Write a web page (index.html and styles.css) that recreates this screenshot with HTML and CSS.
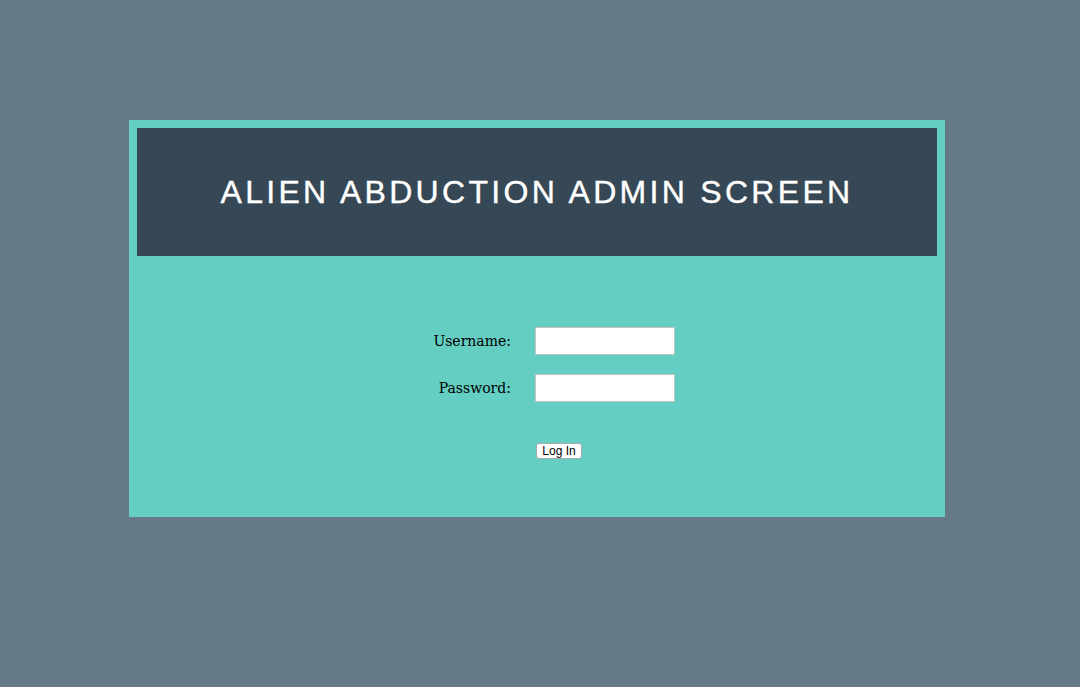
FILE: index.html
```html
<!DOCTYPE html>
<html>
<head>
<meta charset="utf-8">
<title>Alien Abduction Admin Screen</title>
<link rel="stylesheet" href="styles.css">
</head>
<body>
<div class="page">
  <div class="panel">
    <header class="banner">
      <h1 class="title">ALIEN ABDUCTION ADMIN SCREEN</h1>
    </header>
    <form class="login">
      <label class="label" for="user">Username:</label>
      <input class="field" id="user" type="text">
      <label class="label" for="pass">Password:</label>
      <input class="field" id="pass" type="password">
      <span class="spacer"></span>
      <button class="btn" type="button">Log In</button>
    </form>
  </div>
</div>
</body>
</html>
```
FILE: styles.css
```css
html, body {
  margin: 0;
  padding: 0;
  background: #667987;
  height: 100%;
}
.page {
  padding: 120px 0 0 129px;
}
.panel {
  width: 800px;
  padding: 8px;
  background: #63cec1;
}
.banner {
  height: 128px;
  background: #364855;
  display: flex;
  align-items: center;
  justify-content: center;
}
.title {
  margin: 0;
  color: #ffffff;
  font-family: "Liberation Sans", Arial, sans-serif;
  font-weight: normal;
  font-size: 32px;
  letter-spacing: 3.3px;
  padding-left: 0;
  -webkit-text-stroke: 0.4px #ffffff;
}
.login {
  display: grid;
  grid-template-columns: 100px 140px;
  column-gap: 24px;
  row-gap: 19px;
  padding: 71px 0 50px 274px;
  align-items: center;
}
.label {
  text-align: right;
  font-family: "DejaVu Serif", Georgia, serif;
  font-size: 14px;
  color: #000;
}
.field {
  box-sizing: border-box;
  width: 140px;
  height: 28px;
  margin: 0;
  border: 1px solid #c4c4c4;
  background: #fff;
}
.spacer {
  display: block;
}
.btn {
  justify-self: start;
  box-sizing: border-box;
  width: 46px;
  margin: 22px 0 0 1px;
  height: 16px;
  padding: 0;
  font-family: "Liberation Sans", Arial, sans-serif;
  font-size: 12px;
  line-height: 14px;
  background: #fff;
  border: 1px solid #a9a9a9;
  border-radius: 3px;
  color: #000;
}
```
